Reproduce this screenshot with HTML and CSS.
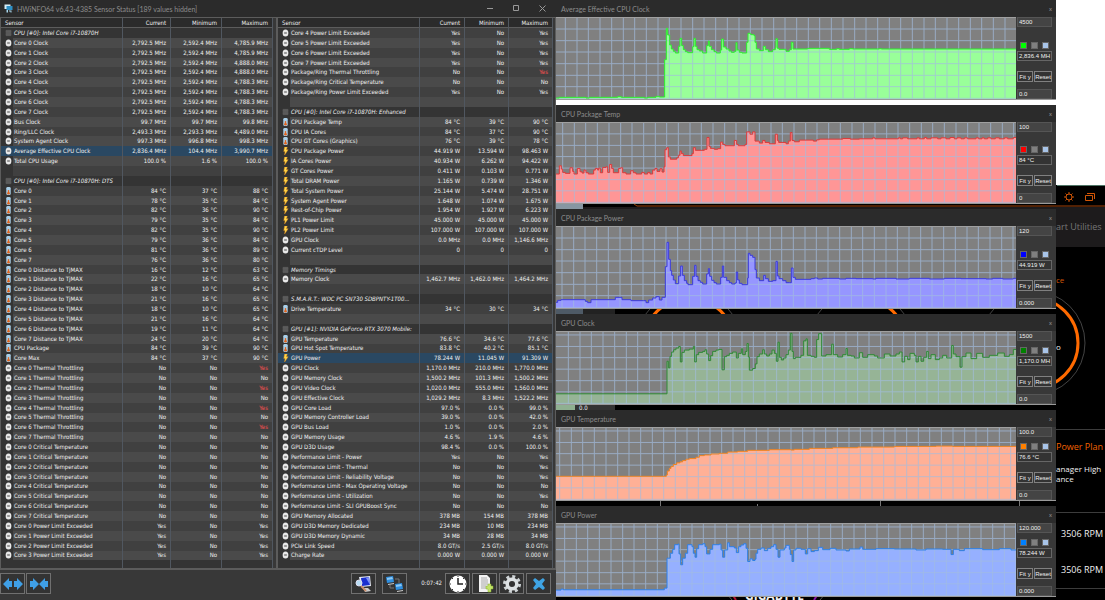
FILE: index.html
```html
<!DOCTYPE html>
<html lang="en">
<head>
    <meta charset="UTF-8">
    <meta name="viewport" content="width=device-width, initial-scale=1.0">
    <title>HWiNFO64 Sensor Status</title>
    <link rel="stylesheet" href="styles.css">
</head>
<body>
    <!-- Shared row icons -->
    <svg class="sprite" aria-hidden="true">
        <symbol id="icon-clock" viewBox="0 0 14 18">
            <ellipse cx="7" cy="9" rx="6.500" ry="8" fill="#e8e8e8"/>
            <path d="M4 9h6" stroke="#555" stroke-width="2.500"/>
        </symbol>
        <symbol id="icon-temp" viewBox="0 0 14 18">
            <rect x="2" y="0" width="10" height="18" rx="3" fill="#a9cfe8"/>
            <path d="M7 7v7" stroke="#e0641e" stroke-width="3"/>
            <circle cx="7" cy="14" r="3" fill="#e0641e"/>
        </symbol>
        <symbol id="icon-power" viewBox="0 0 14 18">
            <path d="M5 0h6L9 6h4L5 18l1-8H3z" fill="#ffd64a" stroke="#e08a1c"/>
        </symbol>
        <symbol id="icon-chip" viewBox="0 0 14 18">
            <rect x="1" y="2" width="12" height="14" fill="#555"/>
            <path d="M0 5h14M0 9h14M0 13h14" stroke="#6b6b6b"/>
        </symbol>
    </svg>

    <div class="desktop">
        <!-- Control center behind the other windows -->
        <svg class="backdrop" viewBox="0 0 1105 600" preserveAspectRatio="none" aria-hidden="true">
            <rect width="1105" height="600" fill="#000"/>
            <rect width="1105" height="185" fill="#fff"/>
            <path d="M1057 185.500h48" stroke="#4f7566"/>
            <rect x="583" y="207" width="522" height="40" fill="#1d1b1c"/>
            <path d="M634 204l3 2h468" fill="none" stroke="#a34208"/>
            <rect x="556" y="200" width="27" height="9" fill="#8796a2"/>
            <rect x="556" y="305" width="27" height="10" fill="#4e5a66"/>
            <rect x="583" y="305" width="32" height="10" fill="#222"/>
            <g fill="none" stroke="#444">
                <circle cx="689" cy="343" r="52"/>
                <circle cx="861" cy="343" r="52"/>
                <circle cx="1033" cy="343" r="52"/>
            </g>
            <g fill="none" stroke="#ff6a00" stroke-width="3">
                <circle cx="689" cy="343" r="45"/>
                <path d="M861 298a45 45 0 0 1 0 90M1033 298a45 45 0 0 1 0 90"/>
            </g>
            <rect x="556" y="402" width="19" height="8" fill="#8fb091"/>
            <rect x="575" y="402" width="40" height="8" fill="#333"/>
            <path d="M1056 429.500h49M1056 512.500h49M1056 588.500h49" stroke="#3c3c3c"/>
            <path d="M660.500 498v8M757.500 504v2M880.500 498v8M1019.500 498v8" stroke="#777"/>
            <path d="M727 594l5 6M825 594l-5 6" stroke="#555"/>
            <path d="M732 594l4 6" stroke="#b01030" stroke-width="2"/>
            <path d="M818 594l-4 6" stroke="#8a14a8" stroke-width="2"/>
        </svg>
        <span class="backdrop-zero">0.0</span>
        <span class="brand">GIGABYTE</span>

        <section class="window sensors">
            <header class="titlebar">
                <svg class="app-icon" viewBox="0 0 18 18" aria-hidden="true">
                    <rect x="1" y="1" width="12" height="9" fill="#d8eef8"/>
                    <rect x="5" y="4" width="12" height="8" fill="#2d8fc4"/>
                    <path d="M5 12h3v5H5zM10 13h5v4h-2v-2h-3z" fill="#a9d8ee"/>
                </svg>
                <h1>HWiNFO64 v6.43-4385 Sensor Status [189 values hidden]</h1>
                <div class="window-buttons">
                    <button type="button" aria-label="Minimize"><svg viewBox="0 0 7 7"><path d="M0 3.500h6"/></svg></button>
                    <button type="button" aria-label="Maximize"><svg viewBox="0 0 7 7"><path d="M.5.5h5v5h-5z"/></svg></button>
                    <button type="button" aria-label="Close"><svg viewBox="0 0 7 7"><path d="M.5.500l6 6M6.500.500l-6 6"/></svg></button>
                </div>
            </header>

            <div class="panels">
                <div class="panel panel-left">
                    <table>
                        <colgroup><col class="col-icon"><col><col class="col-current"><col class="col-minimum"><col class="col-maximum"></colgroup>
                        <thead><tr><th colspan="2">Sensor</th><th>Current</th><th>Minimum</th><th>Maximum</th></tr></thead>
                        <tbody id="sensorsLeft"></tbody>
                    </table>
                </div>
                <div class="panel panel-right">
                    <table>
                        <colgroup><col class="col-icon"><col><col class="col-current"><col class="col-minimum"><col class="col-maximum"></colgroup>
                        <thead><tr><th colspan="2">Sensor</th><th>Current</th><th>Minimum</th><th>Maximum</th></tr></thead>
                        <tbody id="sensorsRight"></tbody>
                    </table>
                </div>
            </div>

            <footer class="toolbar">
                <div class="tools tools-tight">
                    <button type="button" aria-label="Expand columns">
                        <svg viewBox="0 0 20 16"><path d="M0 8l6-6v3h3v6H6v3zM20 8l-6-6v3h-3v6h3v3z" fill="#3f9fe6"/></svg>
                    </button>
                    <button type="button" aria-label="Shrink columns">
                        <svg viewBox="0 0 20 16"><path d="M10 8L4 2v3H1v6h3v3zM10 8l6-6v3h3v6h-3v3z" fill="#3f9fe6"/></svg>
                    </button>
                </div>
                <div class="tools tools-wide">
                    <button type="button" aria-label="Sensor summary">
                        <svg viewBox="0 0 20 16">
                            <path d="M5 1l11-1 1 10-10 1z" fill="#e4e8f4"/>
                            <path d="M7 2l8-1 1 8-8 1z" fill="#1a2fcf"/>
                            <path d="M12 2l3-1 1 8z" fill="#7f93f4"/>
                            <path d="M9 12h5l3 3-6 1z" fill="#ccc"/>
                            <circle cx="5" cy="7" r="3" fill="#b8dcf4" stroke="#dde" />
                            <path d="M7 10l5 5" stroke="#c98d6c" stroke-width="2"/>
                        </svg>
                    </button>
                    <button type="button" aria-label="Remote monitoring">
                        <svg viewBox="0 0 20 16">
                            <path d="M10 3h4v4M5 9v3h4" fill="none" stroke="#777"/>
                            <path d="M1 1l7-1 1 6-7 1z" fill="#2f8fe0"/>
                            <path d="M2 2l5-1 1 2-6 1z" fill="#8cc8f4"/>
                            <path d="M10 8l7-1 1 6-7 1z" fill="#2f8fe0"/>
                            <path d="M11 9l5-1 1 2-6 1z" fill="#8cc8f4"/>
                            <path d="M3 8.500l6-1M12 15.500l6-1" stroke="#ccc"/>
                        </svg>
                    </button>
                </div>
                <time class="elapsed">0:07:42</time>
                <div class="tools">
                    <button type="button" aria-label="Reset clock">
                        <svg viewBox="0 0 18 18">
                            <circle cx="9" cy="9" r="8.500" fill="#fff"/>
                            <path d="M9 3v6h5" fill="none" stroke="#222" stroke-width="1.500"/>
                            <path d="M9 1v1M9 16v1M1 9h1M16 9h1M3 3l1 1M15 3l-1 1M3 15l1-1M15 15l-1-1" stroke="#333"/>
                        </svg>
                    </button>
                    <button type="button" aria-label="Start logging">
                        <svg viewBox="0 0 18 18">
                            <path d="M3 0h8l3 3v14H3z" fill="#f2f2f2"/>
                            <path d="M5 3h6M5 5h7M5 7h7M5 9h7M5 11h5M5 13h5" stroke="#aaa"/>
                            <path d="M10 11h2V9h3v2h2v3h-2v3h-3v-3h-2z" fill="#c3e36a" stroke="#86ad2c" stroke-width=".5"/>
                        </svg>
                    </button>
                    <button type="button" aria-label="Settings">
                        <svg viewBox="0 0 18 18">
                            <circle cx="9" cy="9" r="7.500" fill="none" stroke="#cfd4d6" stroke-width="3" stroke-dasharray="3 2.890"/>
                            <circle cx="9" cy="9" r="4.800" fill="none" stroke="#dde1e3" stroke-width="3.500"/>
                        </svg>
                    </button>
                    <button type="button" aria-label="Close sensors">
                        <svg viewBox="0 0 18 18"><path d="M3 5l2-2 4 3 4-3 2 2-3 4 3 4-2 2-4-3-4 3-2-2 3-4z" fill="#3fa4e4"/></svg>
                    </button>
                </div>
            </footer>
        </section>

        <div class="graphs" id="graphs"></div>

        <aside class="center">
            <div class="center-icons">
                <svg viewBox="0 0 12 12" aria-hidden="true"><circle cx="6" cy="6" r="3"/><path d="M6 1v2M6 9v2M1 6h2M9 6h2M2.500 2.500l1.300 1.300M8.200 8.200l1.300 1.300M2.500 9.500l1.300-1.300M8.200 3.800l1.300-1.300"/></svg>
                <svg viewBox="0 0 12 12" aria-hidden="true"><path d="M1.500 4.500h7v5h-7zM3 2.500h7.500V8"/></svg>
            </div>
            <p class="center-tab">art Utilities</p>
            <p class="center-mode">ce</p>
            <p class="center-unit">o</p>
            <h2 class="center-plan">Power Plan</h2>
            <p class="center-profile">anager High<br>ance</p>
            <p class="center-fan">3506 RPM</p>
            <p class="center-fan">3506 RPM</p>
        </aside>
    </div>

    <script src="script.js"></script>
</body>
</html>
```
FILE: styles.css
```css
* {
    box-sizing: border-box;
}

body {
    margin: 0;
    background-color: #000;
    color: #f0f0f0;
    font-family: "DejaVu Sans Condensed", "DejaVu Sans", sans-serif;
    font-size: 6px;
    line-height: 8px;
}

h1, h2, p {
    margin: 0;
    font-weight: normal;
}

button, input {
    margin: 0;
    font: inherit;
    color: inherit;
}

button {
    padding: 0;
    cursor: pointer;
}

.sprite {
    position: absolute;
    width: 0;
    height: 0;
}

.desktop {
    position: relative;
    display: grid;
    grid-template-columns: 556fr 500fr 49px;
    height: 100vh;
    min-height: 560px;
    overflow: hidden;
}

.backdrop {
    position: absolute;
    inset: 0;
    width: 100%;
    height: 100%;
}

.backdrop-zero {
    position: absolute;
    left: 579px;
    top: 404px;
}

.brand {
    position: absolute;
    left: 745px;
    bottom: 0;
    font-family: "Open Sans", sans-serif;
    font-size: 12px;
    line-height: 8px;
    font-weight: bold;
}

.window {
    position: relative;
    display: flex;
    flex-direction: column;
    min-width: 0;
    min-height: 0;
    background-color: #383838;
}

.titlebar {
    display: flex;
    align-items: center;
    flex: none;
    height: 17px;
    padding: 0 4px;
    background-color: #2b2b2b;
    color: #8c8c8c;
    font-family: Lato, "Open Sans", sans-serif;
    font-size: 7px;
}

.titlebar h1,
.titlebar h2 {
    font-size: 7px;
}

/* Sensor window */

.app-icon {
    width: 9px;
    height: 9px;
    margin-right: 4px;
}

.window-buttons {
    display: flex;
    gap: 19px;
    margin-left: auto;
    padding-right: 6px;
}

.window-buttons button {
    display: flex;
    border: none;
    background: none;
}

.window-buttons svg {
    width: 7px;
    height: 7px;
    fill: none;
    stroke: #999;
}

.panels {
    flex: 1;
    min-height: 0;
    display: grid;
    grid-template-columns: 277fr 279fr;
}

.panel {
    min-width: 0;
    border: 1px solid #5c5c5c;
    border-bottom-width: 2px;
    padding-right: 3px;
}

.panel-right {
    padding-right: 2px;
}

table {
    width: 100%;
    height: 100%;
    table-layout: fixed;
    border-collapse: separate;
    border-spacing: 0;
}

.col-icon {
    width: 12px;
}

.panel-left .col-current {
    width: 48px;
}

.panel-left .col-minimum,
.panel-left .col-maximum {
    width: 51px;
}

.panel-right .col-current {
    width: 45px;
}

.panel-right .col-minimum,
.panel-right .col-maximum {
    width: 44px;
}

th, td {
    padding: 0 4px 0 0;
    border-right: 1px solid #505760;
    overflow: hidden;
    white-space: nowrap;
    text-align: right;
}

thead th {
    height: 10px;
    border-bottom: 1px solid #5c5c5c;
    background-color: #2b2b2b;
    font-weight: normal;
}

th:first-child {
    padding-left: 4px;
    text-align: left;
}

tbody tr {
    background-color: #404040;
}

tbody tr:nth-child(even) {
    background-color: #4a4a4a;
}

tbody tr.group,
tbody tr.filler {
    background-color: #343434;
}

tbody tr.selected,
tbody tr.selected td:first-child {
    background-color: #2a4862;
}

td:first-child {
    padding: 0 0 0 4px;
    border-right: none;
    background-color: #343434;
}

td svg {
    display: block;
    width: 7px;
    height: 8px;
}

tbody th {
    padding: 0 0 0 1px;
    font-weight: normal;
    text-align: left;
    text-overflow: ellipsis;
}

.group th {
    font-style: italic;
}

.filler td {
    line-height: 6px;
}

.alert {
    color: #ff5050;
}

.toolbar {
    display: flex;
    align-items: flex-start;
    flex: none;
    height: 30px;
    padding: 3px 5px 0 0;
}

.tools {
    display: flex;
    gap: 2px;
}

.tools-tight {
    gap: 1px;
}

.tools-wide {
    gap: 6px;
    margin-left: auto;
}

.tools button {
    display: flex;
    align-items: center;
    justify-content: center;
    width: 25px;
    height: 21px;
    border: 1px solid #707070;
    background-color: #333;
}

.tools svg {
    width: 20px;
    height: 18px;
}

.elapsed {
    padding: 6px 3px 0 14px;
}

/* Graph windows */

.graphs {
    display: grid;
    grid-template-rows: 100fr 99fr 100fr 91fr 91fr 91fr;
    gap: 5px;
    min-height: 0;
    min-width: 0;
    padding-bottom: 3px;
}

.graph .titlebar {
    justify-content: space-between;
    padding-left: 5px;
}

.graph .close {
    border: none;
    background: none;
    font-size: 6px;
}

.graph-body {
    flex: 1;
    display: flex;
    min-height: 0;
    border-bottom: 1px solid #9a9a9a;
}

.plot {
    flex: 1;
    min-width: 0;
    height: 100%;
    border-top: 1px solid #a0a0a0;
    background-color: #808080;
}

.plot .area {
    fill: var(--fill);
}

.plot .line {
    fill: none;
    stroke: var(--line);
    stroke-width: 3;
}

.plot .grid {
    stroke: #a3bde0;
    stroke-width: 3;
    opacity: 0.7;
}

.green { --fill: #99ff99; --line: #2df02d; --swatch: #00ff00; }
.red { --fill: #ff9696; --line: #dc3a3a; --swatch: #ff0000; }
.blue { --fill: #9696ff; --line: #3c3cdc; --swatch: #0000ff; }
.forest { --fill: #96b496; --line: #2f8a35; --swatch: #008000; }
.orange { --fill: #ffb096; --line: #f08420; --swatch: #ff8000; }
.sky { --fill: #96b0ff; --line: #2d80e6; --swatch: #0080ff; }

.controls {
    display: flex;
    flex-direction: column;
    flex: none;
    width: 40px;
    padding: 0 4px 0 1px;
    font-family: "Liberation Sans", Arial, sans-serif;
}

.controls input,
.reading {
    display: block;
    width: 100%;
    height: 10px;
    padding: 0 0 0 1px;
    border: 1px solid #555;
    background-color: #444;
    white-space: nowrap;
}

.controls .reading {
    border-color: #666;
    background-color: #333;
}

.swatches {
    display: flex;
    gap: 4px;
    margin: auto 0 2px;
    padding-left: 3px;
}

.swatches button {
    width: 7px;
    height: 7px;
    border: 1px solid #666;
    background-color: #808080;
}

.swatches .swatch-line {
    background-color: var(--swatch);
}

.swatches .swatch-grid {
    background-color: #a8c4e8;
}

.actions {
    display: flex;
    gap: 1px;
    margin: 10px 0 7px;
}

.actions button {
    height: 11px;
    border: 1px solid #808080;
    background-color: #333;
}

.actions .fit {
    width: 16px;
}

.actions .reset {
    width: 18px;
}

/* Control center edge */

.center {
    position: relative;
    padding-top: 191px;
    font-family: "Open Sans", sans-serif;
    font-size: 8px;
    line-height: 10px;
    white-space: nowrap;
}

.center-icons {
    display: flex;
    gap: 9px;
    padding-left: 7px;
}

.center-icons svg {
    width: 12px;
    height: 12px;
    fill: none;
    stroke: #d35606;
}

.center-tab {
    padding-top: 19px;
    color: #777;
    font-size: 9px;
}

.center-mode {
    padding-top: 43px;
    color: #d35606;
}

.center-unit {
    padding-top: 57px;
}

.center-plan {
    padding-top: 90px;
    color: #f26200;
    font-size: 9px;
    line-height: 10px;
}

.center-profile {
    padding-top: 12px;
}

.center-fan {
    padding: 45px 0 0 5px;
    font-size: 9px;
}

.center-fan + .center-fan {
    padding-top: 26px;
}
```
FILE: script.js
```js
const NO = '|No|No|No';
const YES = '|Yes|No|Yes';

// icon|name|current|minimum|maximum, a leading * selects the row, ! marks the maximum
const left = [
    'chip|CPU [#0]: Intel Core i7-10870H',
    'clock|Core 0 Clock|2,792.5 MHz|2,592.4 MHz|4,785.9 MHz',
    'clock|Core 1 Clock|2,792.5 MHz|2,592.4 MHz|4,785.9 MHz',
    'clock|Core 2 Clock|2,792.5 MHz|2,592.4 MHz|4,888.0 MHz',
    'clock|Core 3 Clock|2,792.5 MHz|2,592.4 MHz|4,888.0 MHz',
    'clock|Core 4 Clock|2,792.5 MHz|2,592.4 MHz|4,788.3 MHz',
    'clock|Core 5 Clock|2,792.5 MHz|2,592.4 MHz|4,788.3 MHz',
    'clock|Core 6 Clock|2,792.5 MHz|2,592.4 MHz|4,788.3 MHz',
    'clock|Core 7 Clock|2,792.5 MHz|2,592.4 MHz|4,788.3 MHz',
    'clock|Bus Clock|99.7 MHz|99.7 MHz|99.8 MHz',
    'clock|Ring/LLC Clock|2,493.3 MHz|2,293.3 MHz|4,489.0 MHz',
    'clock|System Agent Clock|997.3 MHz|996.8 MHz|998.3 MHz',
    '*clock|Average Effective CPU Clock|2,836.4 MHz|104.4 MHz|3,990.7 MHz',
    'clock|Total CPU Usage|100.0 %|1.6 %|100.0 %',
    '',
    'chip|CPU [#0]: Intel Core i7-10870H: DTS',
    'temp|Core 0|84 °C|37 °C|88 °C',
    'temp|Core 1|78 °C|35 °C|84 °C',
    'temp|Core 2|82 °C|36 °C|90 °C',
    'temp|Core 3|79 °C|35 °C|84 °C',
    'temp|Core 4|82 °C|35 °C|90 °C',
    'temp|Core 5|79 °C|36 °C|84 °C',
    'temp|Core 6|81 °C|36 °C|89 °C',
    'temp|Core 7|76 °C|36 °C|80 °C',
    'temp|Core 0 Distance to TjMAX|16 °C|12 °C|63 °C',
    'temp|Core 1 Distance to TjMAX|22 °C|16 °C|65 °C',
    'temp|Core 2 Distance to TjMAX|18 °C|10 °C|64 °C',
    'temp|Core 3 Distance to TjMAX|21 °C|16 °C|65 °C',
    'temp|Core 4 Distance to TjMAX|18 °C|10 °C|65 °C',
    'temp|Core 5 Distance to TjMAX|21 °C|16 °C|64 °C',
    'temp|Core 6 Distance to TjMAX|19 °C|11 °C|64 °C',
    'temp|Core 7 Distance to TjMAX|24 °C|20 °C|64 °C',
    'temp|CPU Package|84 °C|39 °C|90 °C',
    'temp|Core Max|84 °C|37 °C|90 °C',
    'clock|Core 0 Thermal Throttling|No|No|!Yes',
    'clock|Core 1 Thermal Throttling' + NO,
    'clock|Core 2 Thermal Throttling|No|No|!Yes',
    'clock|Core 3 Thermal Throttling' + NO,
    'clock|Core 4 Thermal Throttling|No|No|!Yes',
    'clock|Core 5 Thermal Throttling' + NO,
    'clock|Core 6 Thermal Throttling|No|No|!Yes',
    'clock|Core 7 Thermal Throttling' + NO,
    'clock|Core 0 Critical Temperature' + NO,
    'clock|Core 1 Critical Temperature' + NO,
    'clock|Core 2 Critical Temperature' + NO,
    'clock|Core 3 Critical Temperature' + NO,
    'clock|Core 4 Critical Temperature' + NO,
    'clock|Core 5 Critical Temperature' + NO,
    'clock|Core 6 Critical Temperature' + NO,
    'clock|Core 7 Critical Temperature' + NO,
    'clock|Core 0 Power Limit Exceeded' + YES,
    'clock|Core 1 Power Limit Exceeded' + YES,
    'clock|Core 2 Power Limit Exceeded' + YES,
    'clock|Core 3 Power Limit Exceeded' + YES
];

const right = [
    'clock|Core 4 Power Limit Exceeded' + YES,
    'clock|Core 5 Power Limit Exceeded' + YES,
    'clock|Core 6 Power Limit Exceeded' + YES,
    'clock|Core 7 Power Limit Exceeded' + YES,
    'clock|Package/Ring Thermal Throttling|No|No|!Yes',
    'clock|Package/Ring Critical Temperature' + NO,
    'clock|Package/Ring Power Limit Exceeded' + YES,
    '',
    'chip|CPU [#0]: Intel Core i7-10870H: Enhanced',
    'temp|CPU Package Temp|84 °C|39 °C|90 °C',
    'temp|CPU IA Cores|84 °C|37 °C|90 °C',
    'temp|CPU GT Cores (Graphics)|76 °C|39 °C|78 °C',
    'power|CPU Package Power|44.919 W|13.594 W|98.463 W',
    'power|IA Cores Power|40.934 W|6.262 W|94.422 W',
    'power|GT Cores Power|0.411 W|0.103 W|0.771 W',
    'power|Total DRAM Power|1.165 W|0.739 W|1.346 W',
    'power|Total System Power|25.144 W|5.474 W|28.751 W',
    'power|System Agent Power|1.648 W|1.074 W|1.675 W',
    'power|Rest-of-Chip Power|1.954 W|1.927 W|6.223 W',
    'power|PL1 Power Limit|45.000 W|45.000 W|45.000 W',
    'power|PL2 Power Limit|107.000 W|107.000 W|107.000 W',
    'clock|GPU Clock|0.0 MHz|0.0 MHz|1,146.6 MHz',
    'clock|Current cTDP Level|0|0|0',
    '',
    'chip|Memory Timings',
    'clock|Memory Clock|1,462.7 MHz|1,462.0 MHz|1,464.2 MHz',
    '',
    'chip|S.M.A.R.T.: WDC PC SN730 SDBPNTY-1T00...',
    'temp|Drive Temperature|34 °C|30 °C|34 °C',
    '',
    'chip|GPU [#1]: NVIDIA GeForce RTX 3070 Mobile:',
    'temp|GPU Temperature|76.6 °C|34.6 °C|77.6 °C',
    'temp|GPU Hot Spot Temperature|83.8 °C|40.2 °C|85.1 °C',
    '*power|GPU Power|78.244 W|11.045 W|91.309 W',
    'clock|GPU Clock|1,170.0 MHz|210.0 MHz|1,770.0 MHz',
    'clock|GPU Memory Clock|1,500.2 MHz|101.3 MHz|1,500.2 MHz',
    'clock|GPU Video Clock|1,020.0 MHz|555.0 MHz|1,560.0 MHz',
    'clock|GPU Effective Clock|1,029.2 MHz|8.3 MHz|1,522.2 MHz',
    'clock|GPU Core Load|97.0 %|0.0 %|99.0 %',
    'clock|GPU Memory Controller Load|39.0 %|0.0 %|42.0 %',
    'clock|GPU Bus Load|1.0 %|0.0 %|2.0 %',
    'clock|GPU Memory Usage|4.6 %|1.9 %|4.6 %',
    'clock|GPU D3D Usage|98.4 %|0.0 %|100.0 %',
    'clock|Performance Limit - Power' + YES,
    'clock|Performance Limit - Thermal|No|No|Yes',
    'clock|Performance Limit - Reliability Voltage|No|No|Yes',
    'clock|Performance Limit - Max Operating Voltage' + NO,
    'clock|Performance Limit - Utilization|No|No|Yes',
    'clock|Performance Limit - SLI GPUBoost Sync' + NO,
    'clock|GPU Memory Allocated|378 MB|154 MB|378 MB',
    'clock|GPU D3D Memory Dedicated|234 MB|10 MB|234 MB',
    'clock|GPU D3D Memory Dynamic|34 MB|28 MB|34 MB',
    'clock|PCIe Link Speed|8.0 GT/s|2.5 GT/s|8.0 GT/s',
    'clock|Charge Rate|0.000 W|0.000 W|0.000 W'
];

function cell(value) {
    if (value && value[0] === '!') {
        return `<td class="alert">${value.slice(1)}</td>`;
    }
    return `<td>${value || ''}</td>`;
}

function row(text) {
    const selected = text[0] === '*';
    const [icon, name, current, minimum, maximum] = text.replace('*', '').split('|');
    const type = selected ? 'selected' : icon === 'chip' ? 'group' : '';
    const image = icon ? `<svg aria-hidden="true"><use href="#icon-${icon}"/></svg>` : '';
    return `<tr class="${type}"><td>${image}</td><th scope="row">${name || '&nbsp;'}</th>${cell(current)}${cell(minimum)}${cell(maximum)}</tr>`;
}

const filler = '<tr class="filler"><td>&nbsp;</td><td></td><td></td><td></td><td></td></tr>';
document.getElementById('sensorsLeft').innerHTML = left.map(row).join('') + filler;
document.getElementById('sensorsRight').innerHTML = right.map(row).join('') + filler;

// points are "x,height" pairs, each level holds until the next x
const graphs = [
    {
        title: 'Average Effective CPU Clock', color: 'green', height: 243, offset: 28,
        max: '4500', value: '2,836.4 MH', min: '0.0',
        points: '0,3 10,5 90,3 100,5 185,7 196,5 265,3 275,5 300,8 310,6 326,118 331,212 335,192 341,162 346,150 352,143 358,138 368,158 372,182 377,160 382,148 388,142 395,139 410,157 414,182 418,158 423,148 430,144 440,138 452,160 457,174 460,158 466,148 474,142 481,138 493,147 497,180 502,156 510,150 519,144 526,140 535,143 540,169 543,147 550,140 558,138 572,170 576,197 584,193 594,190 597,170 601,150 610,145 622,158 628,148 637,142 650,148 658,154 660,181 664,152 669,149 690,143 700,148 706,170 711,150 755,152 820,149 842,151 850,149 880,151 890,150 970,151 976,150'
    },
    {
        title: 'CPU Package Temp', color: 'red', height: 243, offset: 20,
        max: '100', value: '84 °C', min: '0',
        points: '0,88 10,113 16,103 20,93 28,90 42,107 50,96 54,88 64,105 72,95 78,91 84,100 90,92 97,88 113,100 118,105 125,100 128,106 133,92 140,108 150,110 155,93 161,117 167,105 172,92 188,105 194,107 200,92 210,88 224,98 232,92 240,88 257,93 265,88 275,93 282,88 290,100 297,105 303,96 312,104 318,94 324,110 327,162 332,168 337,140 343,133 362,137 367,145 372,158 376,150 382,144 408,150 412,168 418,160 445,163 453,199 459,172 463,166 475,163 485,165 494,185 500,178 507,174 535,190 542,178 547,174 567,178 572,216 582,209 590,216 597,188 610,182 620,190 627,184 640,180 658,209 664,190 668,184 690,180 697,188 703,214 708,190 715,186 730,191 772,188 782,192 790,194 860,196 883,194 910,195 950,198 957,195 1027,198 1033,195 1040,198 1055,195 1083,198 1090,195 1105,199 1112,195 1125,198 1145,195 1155,198 1170,195 1182,199 1195,195 1203,198 1215,195 1225,198 1235,195 1260,198 1268,195 1278,198 1285,195 1295,198 1305,195 1318,198 1330,195 1345,198 1355,195 1372,199'
    },
    {
        title: 'CPU Package Power', color: 'blue', height: 243, offset: 18,
        max: '120', value: '44.919 W', min: '0.000',
        points: '0,17 5,23 15,25 88,20 95,16 105,25 178,32 198,25 225,22 262,22 270,16 278,24 290,30 300,34 310,24 318,32 328,124 333,197 338,146 343,112 347,98 352,84 358,73 368,96 374,126 379,98 385,82 392,74 396,70 410,95 416,128 420,95 426,82 433,77 440,72 452,102 457,118 461,95 467,83 474,76 481,72 494,92 499,126 503,92 512,82 520,76 527,72 537,75 541,108 545,84 550,74 558,70 575,90 577,164 582,158 590,152 597,115 601,90 610,82 623,98 628,88 637,80 650,82 660,140 664,96 669,88 680,82 690,76 700,76 706,120 711,92 718,86 765,88 775,90 785,87 800,89 850,87 870,89 900,88 950,87 960,89 1020,87 1060,89 1120,87 1165,89 1215,88 1290,87 1310,89 1340,87 1372,89'
    },
    {
        title: 'GPU Clock', color: 'forest', height: 219, offset: 37,
        max: '1500', value: '1,170.0 MH', min: '0.0',
        points: '0,31 333,130 337,110 342,145 347,158 353,165 360,170 368,175 373,128 378,157 385,164 400,167 412,175 416,128 421,150 428,157 440,160 447,165 452,152 458,132 464,147 470,160 480,164 488,166 498,104 505,144 512,148 520,154 530,158 541,140 547,154 556,168 560,150 568,160 573,184 577,143 580,103 590,108 598,122 603,144 610,152 620,165 625,152 632,146 640,152 648,164 655,154 661,130 666,188 670,142 676,134 683,140 690,150 697,164 703,215 708,160 712,138 718,142 735,148 743,192 750,198 754,148 765,145 775,142 782,196 788,214 797,146 810,150 827,182 832,150 845,143 860,150 870,169 874,148 885,146 895,140 910,156 920,142 935,150 955,146 965,140 985,152 1002,146 1020,152 1030,158 1038,128 1046,145 1055,135 1062,154 1075,148 1080,128 1087,145 1095,130 1103,142 1112,160 1117,138 1125,150 1138,135 1150,140 1160,148 1172,140 1187,178 1192,152 1200,144 1212,112 1218,144 1230,155 1245,138 1262,154 1280,142 1300,148 1325,155 1345,145 1360,150 1372,166'
    },
    {
        title: 'GPU Temperature', color: 'orange', height: 219, offset: 11,
        max: '100.0', value: '76.6 °C', min: '0.0',
        points: '0,72 331,76 334,88 340,96 345,102 352,108 362,113 372,116 380,120 390,124 400,126 420,130 430,135 445,137 465,140 490,142 515,146 545,148 575,151 640,153 705,152 715,154 760,157 830,159 905,161 1015,163 1140,164 1190,163'
    },
    {
        title: 'GPU Power', color: 'sky', height: 219, offset: 26,
        max: '120.000', value: '78.244 W', min: '0.000',
        points: '0,18 15,21 22,19 325,24 333,115 343,130 350,142 356,156 366,158 369,128 374,95 380,115 388,130 395,156 408,150 412,130 417,118 422,144 428,156 440,159 447,150 452,128 462,142 470,156 490,158 495,140 500,118 506,140 515,162 520,150 535,146 541,132 548,150 555,155 563,159 570,145 575,105 582,113 590,108 597,112 600,130 605,142 615,146 625,138 635,145 645,150 653,156 660,142 666,118 672,140 685,146 690,154 700,142 703,126 708,105 713,140 720,145 735,142 748,128 755,144 765,135 775,138 787,148 800,141 822,145 840,140 870,137 880,143 912,149 920,142 960,144 1015,143 1080,140 1110,143 1160,142 1185,126 1192,142 1210,138 1225,144 1280,141 1330,144 1365,140'
    }
];

const WIDTH = 1380;
const STEP = 34.7;

function stepPath(points, height) {
    let path = '';
    points.split(' ').forEach((point) => {
        const [x, level] = point.split(',').map(Number);
        const y = height - level;
        path += path ? `H${x}V${y}` : `M${x} ${y}`;
    });
    return path + `H${WIDTH}`;
}

function gridPath(height, offset) {
    let path = '';
    for (let x = offset; x < WIDTH; x += STEP) {
        path += `M${Math.round(x)} 0V${height}`;
    }
    for (let y = height - 2; y > 0; y -= STEP) {
        path += `M0 ${Math.round(y)}H${WIDTH}`;
    }
    return path;
}

document.getElementById('graphs').innerHTML = graphs.map((graph) => {
    const line = stepPath(graph.points, graph.height);
    return `<section class="window graph ${graph.color}">
        <header class="titlebar"><h2>${graph.title}</h2><button type="button" class="close" aria-label="Close ${graph.title}">x</button></header>
        <div class="graph-body">
            <svg class="plot" viewBox="0 0 ${WIDTH} ${graph.height}" preserveAspectRatio="none" role="img" aria-label="${graph.title}">
                <path class="area" d="${line}V${graph.height}H0Z"/>
                <path class="grid" d="${gridPath(graph.height, graph.offset)}"/>
                <path class="line" d="${line}"/>
            </svg>
            <div class="controls">
                <input type="text" aria-label="Maximum" value="${graph.max}">
                <div class="swatches">
                    <button type="button" class="swatch-line" aria-label="Line color"></button>
                    <button type="button" aria-label="Background color"></button>
                    <button type="button" class="swatch-grid" aria-label="Grid color"></button>
                </div>
                <output class="reading">${graph.value}</output>
                <div class="actions"><button type="button" class="fit">Fit y</button><button type="button" class="reset">Reset</button></div>
                <input type="text" aria-label="Minimum" value="${graph.min}">
            </div>
        </div>
    </section>`;
}).join('');
```
